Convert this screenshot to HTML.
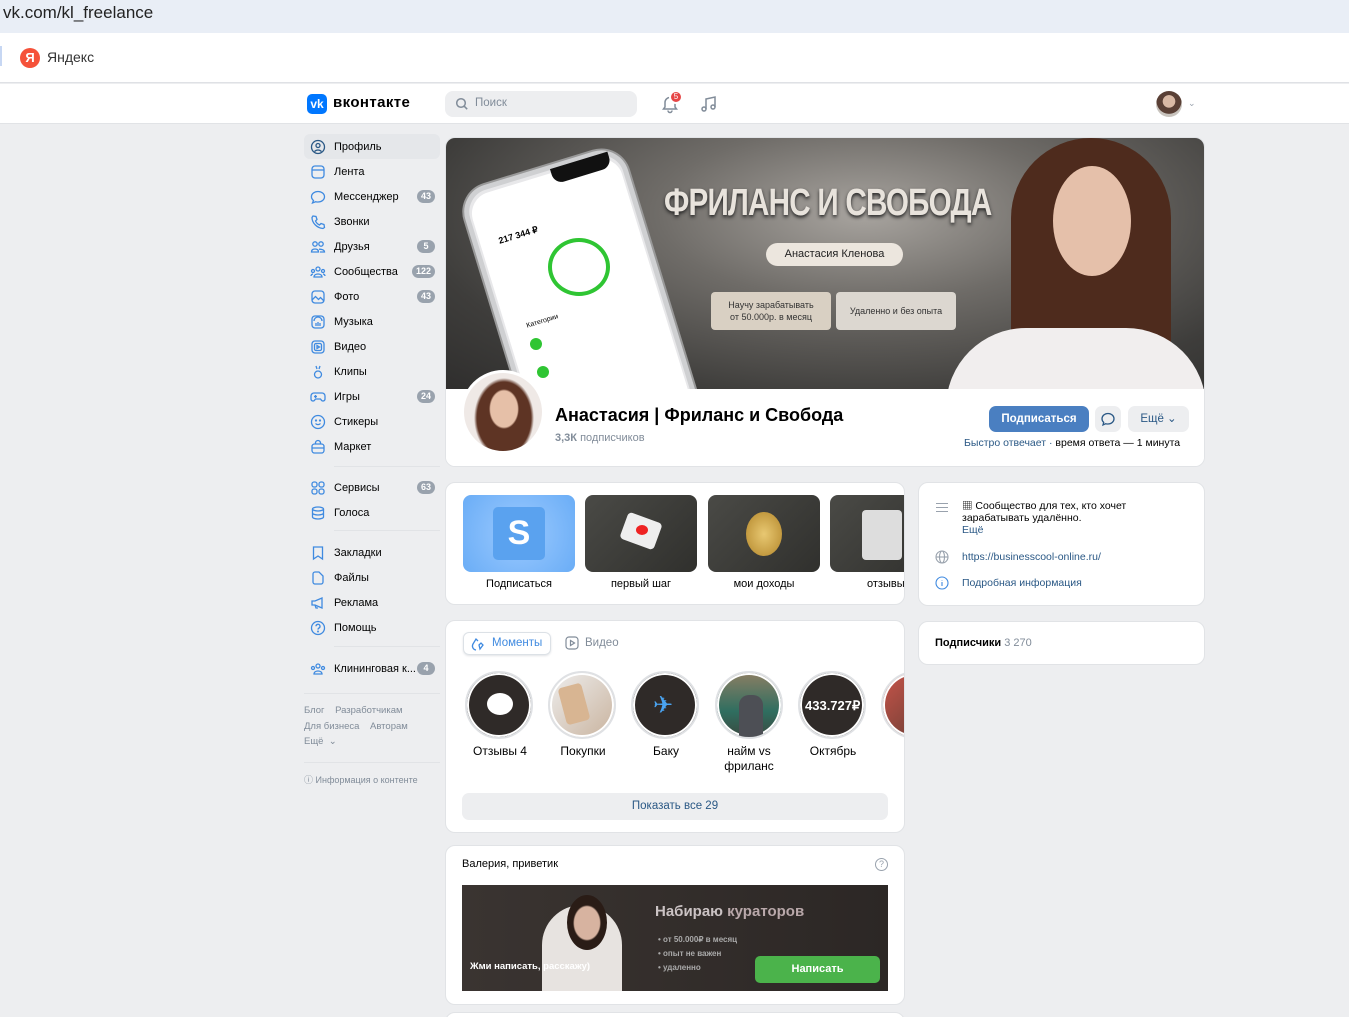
<!DOCTYPE html>
<html><head><meta charset="utf-8">
<style>
*{box-sizing:border-box;margin:0;padding:0}
html{overflow:hidden}
body{width:1349px;height:1017px;overflow:hidden;background:#edeef0;font-family:"Liberation Sans","Noto Sans CJK SC",sans-serif;font-size:11px;color:#000;position:relative}
.abs{position:absolute}
.card{position:absolute;background:#fff;border-radius:10px;border:1px solid #e1e3e6}
.nav{position:absolute;left:304px;width:136px;height:25px;display:flex;align-items:center;font-size:11px;color:#000}
.nav svg{width:16px;height:16px;margin-left:6px;margin-right:8px;flex:none}
.nav .b{margin-left:auto;margin-right:5px;background:#99a2ad;color:#fff;font-size:9px;font-weight:bold;border-radius:8px;height:13px;min-width:18px;padding:0 4px;line-height:13px;text-align:center}
.sep{position:absolute;left:334px;width:106px;height:1px;background:#e1e3e6}
.foot{position:absolute;left:304px;color:#818c99;font-size:9.5px}
.thumb{position:absolute;top:495px;width:112px;height:77px;border-radius:8px}
.tl{position:absolute;top:578px;width:112px;text-align:center;font-size:11px}
.mom{position:absolute;top:50px;width:68px;height:68px;border-radius:50%;border:2px solid #dfe1e4;background:#2f2a28;box-shadow:inset 0 0 0 2px #fff;overflow:hidden}
.ml{position:absolute;top:123px;width:80px;text-align:center;font-size:12px;line-height:15px}
</style></head><body>
<div class="abs" style="left:0;top:0;width:1349px;height:33px;background:#e9eef6"></div>
<div class="abs" style="left:3px;top:3px;font-size:17px;color:#222">vk.com/kl_freelance</div>
<div class="abs" style="left:0;top:33px;width:1349px;height:50px;background:#fff;border-bottom:1px solid #dfe1e5"></div>
<div class="abs" style="left:0;top:46px;width:2px;height:20px;background:#c7d7f3"></div>
<div class="abs" style="left:20px;top:48px;width:20px;height:20px;border-radius:50%;background:#f5523a;color:#fff;font-size:13px;font-weight:bold;text-align:center;line-height:20px">Я</div>
<div class="abs" style="left:47px;top:49px;font-size:14px;color:#333">Яндекс</div>
<div class="abs" style="left:0;top:84px;width:1349px;height:40px;background:#fff;border-bottom:1px solid #e1e3e6"></div>
<div class="abs" style="left:307px;top:94px;width:20px;height:20px;border-radius:5px;background:#0077ff;color:#fff;font-weight:bold;font-size:12px;text-align:center;line-height:20px">vk</div>
<div class="abs" style="left:333px;top:94px;font-size:15px;font-weight:bold;letter-spacing:0.4px">вконтакте</div>
<div class="abs" style="left:445px;top:91px;width:192px;height:26px;border-radius:8px;background:#edeef0"></div>
<svg class="abs" style="left:455px;top:97px" width="14" height="14" viewBox="0 0 14 14"><circle cx="6" cy="6" r="4.3" fill="none" stroke="#818c99" stroke-width="1.5"/><path d="M9.2 9.2l3 3" stroke="#818c99" stroke-width="1.5"/></svg>
<div class="abs" style="left:475px;top:97px;color:#818c99;font-size:11.5px">Поиск</div>
<svg class="abs" style="left:660px;top:94px" width="20" height="20" viewBox="0 0 20 20"><path d="M5 13V8.5a5 5 0 0110 0V13l1.5 2h-13z M8 16.5a2 2 0 004 0" fill="none" stroke="#818c99" stroke-width="1.5"/></svg>
<div class="abs" style="left:669px;top:90px;width:14px;height:14px;border-radius:50%;background:#e64646;border:2px solid #fff;color:#fff;font-size:8px;text-align:center;line-height:10px">5</div>
<svg class="abs" style="left:699px;top:94px" width="20" height="20" viewBox="0 0 20 20"><path d="M7 15V5l9-2v10" fill="none" stroke="#818c99" stroke-width="1.5"/><circle cx="5" cy="15" r="2" fill="none" stroke="#818c99" stroke-width="1.5"/><circle cx="14" cy="13" r="2" fill="none" stroke="#818c99" stroke-width="1.5"/></svg>
<div class="abs" style="left:1156px;top:91px;width:26px;height:26px;border-radius:50%;background:radial-gradient(circle at 50% 40%,#d9b9a5 0 30%,#5a4036 32% 60%,#c8c3bd 62%)"></div>
<div class="abs" style="left:1188px;top:98px;color:#99a2ad;font-size:9px">⌄</div>

<div class="abs" style="left:304px;top:134px;width:136px;height:25px;background:#e5e7ea;border-radius:6px"></div>
<div class="nav" style="top:134px"><svg viewBox="0 0 16 16" fill="none" stroke="#2a5885" stroke-width="1.3"><circle cx="8" cy="8" r="6.5"/><circle cx="8" cy="6.5" r="2"/><path d="M4.5 12.5c2-2 5-2 7 0"/></svg>Профиль</div>
<div class="nav" style="top:159px"><svg viewBox="0 0 16 16" fill="none" stroke="#3f8ae0" stroke-width="1.3"><rect x="2" y="2" width="12" height="12" rx="3"/><path d="M2 6h12"/></svg>Лента</div>
<div class="nav" style="top:184px"><svg viewBox="0 0 16 16" fill="none" stroke="#3f8ae0" stroke-width="1.3"><path d="M8 2.5c3.6 0 6.5 2.3 6.5 5.3S11.6 13 8 13c-.8 0-1.5-.1-2.2-.3L2.5 14l1-2.5C2.3 10.5 1.5 9.2 1.5 7.8 1.5 4.8 4.4 2.5 8 2.5z"/></svg>Мессенджер<span class="b">43</span></div>
<div class="nav" style="top:209px"><svg viewBox="0 0 16 16" fill="none" stroke="#3f8ae0" stroke-width="1.3"><path d="M3 2l3 .5 1 3-1.5 1.5a8 8 0 004 4L11 9.5l3 1 .5 3-1.5 1C7 14 2 9 2 3.5z"/></svg>Звонки</div>
<div class="nav" style="top:234px"><svg viewBox="0 0 16 16" fill="none" stroke="#3f8ae0" stroke-width="1.3"><circle cx="5" cy="5" r="2.2"/><circle cx="11" cy="5" r="2.2"/><path d="M1.5 13c0-2 1.5-3 3.5-3s3.5 1 3.5 3zM9 10.2c2 0 5.5.5 5.5 2.8H10"/></svg>Друзья<span class="b">5</span></div>
<div class="nav" style="top:259px"><svg viewBox="0 0 16 16" fill="none" stroke="#3f8ae0" stroke-width="1.3"><circle cx="8" cy="5" r="2"/><circle cx="3" cy="7" r="1.5"/><circle cx="13" cy="7" r="1.5"/><path d="M4 13c0-2 2-3 4-3s4 1 4 3zM1 12c0-1 1-2 2-2M15 12c0-1-1-2-2-2"/></svg>Сообщества<span class="b">122</span></div>
<div class="nav" style="top:284px"><svg viewBox="0 0 16 16" fill="none" stroke="#3f8ae0" stroke-width="1.3"><rect x="2" y="2" width="12" height="12" rx="3"/><path d="M2 11l3.5-3.5 3 3 2-2L14 12"/></svg>Фото<span class="b">43</span></div>
<div class="nav" style="top:309px"><svg viewBox="0 0 16 16" fill="none" stroke="#3f8ae0" stroke-width="1.3"><rect x="2" y="2" width="12" height="12" rx="3"/><path d="M4 7a4 4 0 018 0M6 12V9M8 12V8M10 12V9"/></svg>Музыка</div>
<div class="nav" style="top:334px"><svg viewBox="0 0 16 16" fill="none" stroke="#3f8ae0" stroke-width="1.3"><rect x="2" y="2" width="12" height="12" rx="3"/><rect x="4.5" y="4.5" width="7" height="7" rx="1.5"/><path d="M7 6.5v3l2.5-1.5z"/></svg>Видео</div>
<div class="nav" style="top:359px"><svg viewBox="0 0 16 16" fill="none" stroke="#3f8ae0" stroke-width="1.3"><circle cx="8" cy="10.5" r="3.5"/><path d="M6 2l1 3M10 2l-1 3"/></svg>Клипы</div>
<div class="nav" style="top:384px"><svg viewBox="0 0 16 16" fill="none" stroke="#3f8ae0" stroke-width="1.3"><path d="M4 4h8a3 3 0 013 3v3a2 2 0 01-3.5 1.3L10.5 10h-5l-1 1.3A2 2 0 011 10V7a3 3 0 013-3zM4 7.5h3M5.5 6v3"/></svg>Игры<span class="b">24</span></div>
<div class="nav" style="top:409px"><svg viewBox="0 0 16 16" fill="none" stroke="#3f8ae0" stroke-width="1.3"><circle cx="8" cy="8" r="6.5"/><path d="M5.5 9.5c1.3 1.5 3.7 1.5 5 0"/><circle cx="6" cy="6.5" r=".5"/><circle cx="10" cy="6.5" r=".5"/></svg>Стикеры</div>
<div class="nav" style="top:434px"><svg viewBox="0 0 16 16" fill="none" stroke="#3f8ae0" stroke-width="1.3"><rect x="2" y="5" width="12" height="9" rx="2.5"/><path d="M5.5 5V4a2.5 2.5 0 015 0v1M2 9h12"/></svg>Маркет</div>
<div class="sep" style="top:466px"></div>
<div class="nav" style="top:475px"><svg viewBox="0 0 16 16" fill="none" stroke="#3f8ae0" stroke-width="1.3"><rect x="2" y="2" width="5" height="5" rx="2"/><rect x="9" y="2" width="5" height="5" rx="2"/><rect x="2" y="9" width="5" height="5" rx="2"/><rect x="9" y="9" width="5" height="5" rx="2"/></svg>Сервисы<span class="b">63</span></div>
<div class="nav" style="top:500px"><svg viewBox="0 0 16 16" fill="none" stroke="#3f8ae0" stroke-width="1.3"><ellipse cx="8" cy="4" rx="5.5" ry="2"/><path d="M2.5 4v8c0 1.1 2.5 2 5.5 2s5.5-.9 5.5-2V4M2.5 8c0 1.1 2.5 2 5.5 2s5.5-.9 5.5-2"/></svg>Голоса</div>
<div class="sep" style="top:530px"></div>
<div class="nav" style="top:540px"><svg viewBox="0 0 16 16" fill="none" stroke="#3f8ae0" stroke-width="1.3"><path d="M3.5 2h9v12L8 11l-4.5 3z"/></svg>Закладки</div>
<div class="nav" style="top:565px"><svg viewBox="0 0 16 16" fill="none" stroke="#3f8ae0" stroke-width="1.3"><path d="M3 4a2 2 0 012-2h4l4 4v6a2 2 0 01-2 2H5a2 2 0 01-2-2z"/></svg>Файлы</div>
<div class="nav" style="top:590px"><svg viewBox="0 0 16 16" fill="none" stroke="#3f8ae0" stroke-width="1.3"><path d="M2 6h3l7-3v10L5 10H2zM5 10l1 3h2"/></svg>Реклама</div>
<div class="nav" style="top:615px"><svg viewBox="0 0 16 16" fill="none" stroke="#3f8ae0" stroke-width="1.3"><circle cx="8" cy="8" r="6.5"/><path d="M6 6.3a2 2 0 113 1.7c-.7.4-1 .8-1 1.6"/><circle cx="8" cy="11.5" r=".4"/></svg>Помощь</div>
<div class="sep" style="top:646px"></div>
<div class="nav" style="top:656px"><svg viewBox="0 0 16 16" fill="none" stroke="#3f8ae0" stroke-width="1.3"><circle cx="8" cy="5" r="2"/><circle cx="3" cy="7" r="1.5"/><circle cx="13" cy="7" r="1.5"/><path d="M4 13c0-2 2-3 4-3s4 1 4 3z"/></svg>Клининговая к...<span class="b">4</span></div>
<div class="abs" style="left:304px;top:693px;width:136px;height:1px;background:#e1e3e6"></div>
<div class="foot" style="top:705px">Блог &nbsp;&nbsp; Разработчикам</div>
<div class="foot" style="top:721px">Для бизнеса &nbsp;&nbsp; Авторам</div>
<div class="foot" style="top:736px">Ещё &nbsp;⌄</div>
<div class="abs" style="left:304px;top:762px;width:136px;height:1px;background:#e1e3e6"></div>
<div class="foot" style="top:773px;font-size:9px">ⓘ Информация о контенте</div>

<div class="card" style="left:445px;top:137px;width:760px;height:330px;overflow:hidden">
 <div class="abs" style="left:0;top:0;width:760px;height:252px;background:radial-gradient(ellipse at 55% 30%,#a8a49f 0%,#6f6c68 35%,#3e3d3b 75%,#2f2e2d 100%)"></div>
 <div class="abs" style="left:50px;top:24px;width:170px;height:290px;background:#e8e8ea;border:5px solid #cfd0d2;border-radius:28px;transform:rotate(-17deg);box-shadow:0 0 0 2px #999"></div>
 <div class="abs" style="left:58px;top:32px;width:156px;height:280px;background:#fff;border-radius:22px;transform:rotate(-17deg)"></div>
 <div class="abs" style="left:105px;top:22px;width:60px;height:16px;background:#111;border-radius:0 0 10px 10px;transform:rotate(-17deg)"></div>
 <div class="abs" style="left:52px;top:92px;font-size:9px;transform:rotate(-17deg);font-weight:bold">217 344 ₽</div>
 <div class="abs" style="left:102px;top:100px;width:62px;height:58px;border-radius:50%;border:4px solid #2fc533"></div>
 <div class="abs" style="left:80px;top:180px;font-size:7px;transform:rotate(-17deg)">Категории</div>
 <div class="abs" style="left:84px;top:200px;width:12px;height:12px;border-radius:50%;background:#2fc533"></div>
 <div class="abs" style="left:91px;top:228px;width:12px;height:12px;border-radius:50%;background:#2fc533"></div>
 <div class="abs" style="left:218px;top:44px;font-size:38px;font-weight:bold;color:#e8e3dc;letter-spacing:-1px;transform:scaleX(0.78);transform-origin:left;text-shadow:0 2px 4px #222;white-space:nowrap">ФРИЛАНС И СВОБОДА</div>
 <div class="abs" style="left:320px;top:105px;width:137px;height:23px;border-radius:12px;background:#ece6de;font-size:11px;text-align:center;line-height:23px;color:#222">Анастасия Кленова</div>
 <div class="abs" style="left:265px;top:154px;width:120px;height:38px;border-radius:4px;background:#d9d0c3;font-size:9px;text-align:center;line-height:12px;padding-top:7px;color:#333">Научу зарабатывать<br>от 50.000р. в месяц</div>
 <div class="abs" style="left:390px;top:154px;width:120px;height:38px;border-radius:4px;background:#dcd7d0;font-size:9px;text-align:center;line-height:38px;color:#333">Удаленно и без опыта</div>
 <div class="abs" style="left:565px;top:0;width:160px;height:250px;border-radius:80px 80px 30px 30px;background:#4e2b1d"></div>
 <div class="abs" style="left:607px;top:28px;width:78px;height:110px;border-radius:50%;background:#e5c0aa"></div>
 <div class="abs" style="left:500px;top:190px;width:260px;height:80px;border-radius:100px 100px 0 0;background:#f1eeee"></div>
 <div class="abs" style="left:0;top:251px;width:760px;height:80px;background:#fff"></div>
 <div class="abs" style="left:15px;top:232px;width:84px;height:84px;border-radius:50%;border:3px solid #fff;background:radial-gradient(ellipse 15px 20px at 40px 36px,#e6c0a8 0 90%,transparent 100%),radial-gradient(ellipse 30px 40px at 40px 45px,#5e3424 0 90%,transparent 100%),#efe9e6"></div>
 <div class="abs" style="left:109px;top:267px;font-size:18px;font-weight:bold;color:#000">Анастасия | Фриланс и Свобода</div>
 <div class="abs" style="left:109px;top:294px;font-size:11px;color:#818c99"><b>3,3К</b> подписчиков</div>
 <div class="abs" style="left:543px;top:268px;width:100px;height:26px;border-radius:7px;background:#4a7fc1;color:#fff;font-size:11.5px;font-weight:bold;text-align:center;line-height:26px">Подписаться</div>
 <div class="abs" style="left:649px;top:268px;width:26px;height:26px;border-radius:7px;background:#edeef0"></div>
 <svg class="abs" style="left:654px;top:273px" width="16" height="16" viewBox="0 0 16 16"><path d="M8 2.5c3.3 0 6 2.3 6 5.3s-2.7 5.2-6 5.2c-.8 0-1.5-.1-2.2-.3L3 14l.7-2.6C2.6 10.5 2 9.2 2 7.8 2 4.8 4.7 2.5 8 2.5z" fill="none" stroke="#2a5885" stroke-width="1.3"/></svg>
 <div class="abs" style="left:682px;top:268px;width:61px;height:26px;border-radius:7px;background:#edeef0;color:#2a5885;font-size:11.5px;text-align:center;line-height:26px">Ещё ⌄</div>
 <div class="abs" style="left:518px;top:299px;font-size:10.5px;color:#2a5885;white-space:nowrap">Быстро отвечает · <span style="color:#000">время ответа — 1 минута</span></div>
</div>

<div class="card" style="left:445px;top:482px;width:460px;height:123px;overflow:hidden">
 <div class="thumb" style="left:17px;top:12px;background:radial-gradient(circle,#9ccaff,#6aadf6)"><div class="abs" style="left:30px;top:12px;width:52px;height:53px;border-radius:5px;background:#5aa2ef;color:#fff;font-size:34px;font-weight:bold;text-align:center;line-height:53px">S</div></div>
 <div class="thumb" style="left:139px;top:12px;background:linear-gradient(135deg,#4a4a46,#30302d)"><div class="abs" style="left:38px;top:22px;width:36px;height:28px;background:#eee;border-radius:4px;transform:rotate(20deg)"></div><div class="abs" style="left:51px;top:30px;width:12px;height:10px;background:#e22;border-radius:50%"></div></div>
 <div class="thumb" style="left:262px;top:12px;background:linear-gradient(135deg,#4a4a46,#30302d)"><div class="abs" style="left:38px;top:17px;width:36px;height:44px;border-radius:50%;background:radial-gradient(#e8c872,#b3862a)"></div></div>
 <div class="thumb" style="left:384px;top:12px;background:linear-gradient(135deg,#4a4a46,#30302d)"><div class="abs" style="left:32px;top:15px;width:40px;height:50px;background:#ddd;border-radius:4px"></div></div>
 <div class="tl" style="left:17px;top:95px">Подписаться</div>
 <div class="tl" style="left:139px;top:95px">первый шаг</div>
 <div class="tl" style="left:262px;top:95px">мои доходы</div>
 <div class="tl" style="left:384px;top:95px;text-align:left;padding-left:37px">отзывы</div>
</div>

<div class="card" style="left:918px;top:482px;width:287px;height:124px">
 <div class="abs" style="left:17px;top:20px;width:12px;height:1px;background:#99a2ad;box-shadow:0 4px 0 #99a2ad,0 8px 0 #99a2ad"></div>
 <div class="abs" style="left:43px;top:17px;font-size:10.5px;line-height:12px;width:230px">▦ Сообщество для тех, кто хочет зарабатывать удалённо.<br><span style="color:#2a5885">Ещё</span></div>
 <svg class="abs" style="left:16px;top:67px" width="14" height="14" viewBox="0 0 14 14" fill="none" stroke="#99a2ad" stroke-width="1.1"><circle cx="7" cy="7" r="6"/><ellipse cx="7" cy="7" rx="2.5" ry="6"/><path d="M1 7h12"/></svg>
 <div class="abs" style="left:43px;top:68px;font-size:10.5px;color:#2a5885">https://businesscool-online.ru/</div>
 <svg class="abs" style="left:16px;top:93px" width="14" height="14" viewBox="0 0 14 14" fill="none" stroke="#3f8ae0" stroke-width="1.1"><circle cx="7" cy="7" r="6"/><path d="M7 6v4M7 4v.5"/></svg>
 <div class="abs" style="left:43px;top:94px;font-size:10.5px;color:#2a5885">Подробная информация</div>
</div>

<div class="card" style="left:918px;top:621px;width:287px;height:44px">
 <div class="abs" style="left:16px;top:15px;font-size:11px;font-weight:bold">Подписчики <span style="font-weight:normal;color:#818c99">3 270</span></div>
</div>

<div class="card" style="left:445px;top:620px;width:460px;height:213px;overflow:hidden">
 <div class="abs" style="left:17px;top:11px;width:88px;height:23px;border-radius:6px;border:1px solid #dce1e6;box-shadow:0 1px 2px #e1e3e6;color:#3f8ae0;font-size:11.5px;line-height:21px;padding-left:28px">Моменты</div>
 <svg class="abs" style="left:25px;top:15px" width="16" height="16" viewBox="0 0 16 16" fill="none" stroke="#3f8ae0" stroke-width="1.3"><path d="M5 14a4 4 0 01-3-6l3-5 2 2M8 9l2-2 2 2-3 4z"/></svg>
 <svg class="abs" style="left:119px;top:15px" width="14" height="14" viewBox="0 0 14 14" fill="none" stroke="#818c99" stroke-width="1.2"><rect x="1" y="1" width="12" height="12" rx="3"/><path d="M5.5 4.5v5l4-2.5z"/></svg>
 <div class="abs" style="left:139px;top:16px;color:#818c99;font-size:11.5px">Видео</div>
 <div class="mom" style="left:19px"><div class="abs" style="left:20px;top:20px;width:26px;height:22px;border-radius:50%;background:#fff"></div></div>
 <div class="mom" style="left:102px;background:linear-gradient(135deg,#eee,#c9b39e)"><div class="abs" style="left:12px;top:12px;width:24px;height:38px;background:#d8b592;border-radius:4px;transform:rotate(-15deg)"></div></div>
 <div class="mom" style="left:185px"><div class="abs" style="left:20px;top:18px;font-size:24px;color:#4aa3f0">✈</div></div>
 <div class="mom" style="left:269px;background:linear-gradient(180deg,#8a7e63 0%,#2f6e60 60%,#3a4a40)"><div class="abs" style="left:22px;top:22px;width:24px;height:44px;background:#4d4f55;border-radius:10px 10px 0 0"></div></div>
 <div class="mom" style="left:352px"><div class="abs" style="left:5px;top:25px;color:#fff;font-size:13px;font-weight:bold">433.727₽</div></div>
 <div class="mom" style="left:435px;background:linear-gradient(135deg,#c8544a,#5a3a30)"></div>
 <div class="ml" style="left:14px">Отзывы 4</div>
 <div class="ml" style="left:97px">Покупки</div>
 <div class="ml" style="left:180px">Баку</div>
 <div class="ml" style="left:263px">найм vs<br>фриланс</div>
 <div class="ml" style="left:347px">Октябрь</div>
 <div class="abs" style="left:16px;top:172px;width:426px;height:27px;border-radius:7px;background:#edeef0;color:#2a5885;font-size:11.5px;text-align:center;line-height:27px">Показать все 29</div>
</div>

<div class="card" style="left:445px;top:845px;width:460px;height:160px">
 <div class="abs" style="left:16px;top:12px;font-size:11px">Валерия, приветик</div>
 <div class="abs" style="left:429px;top:12px;width:13px;height:13px;border-radius:50%;border:1px solid #99a2ad;color:#99a2ad;font-size:9px;text-align:center;line-height:11px">?</div>
 <div class="abs" style="left:16px;top:39px;width:426px;height:106px;background:linear-gradient(90deg,#3a3431,#2c2725);overflow:hidden">
  <div class="abs" style="left:80px;top:20px;width:80px;height:100px;border-radius:40px 40px 0 0;background:#e7e3e0"></div>
  <div class="abs" style="left:105px;top:10px;width:40px;height:55px;border-radius:50%;background:radial-gradient(ellipse 14px 18px at 20px 28px,#d7b3a0 0 90%,#2a1c16 100%)"></div>
  <div class="abs" style="left:193px;top:18px;font-size:15px;font-weight:bold;color:#cbc3c4">Набираю <span style="color:#b9a8aa">кураторов</span></div>
  <div class="abs" style="left:196px;top:48px;font-size:8px;font-weight:bold;color:#aaa;line-height:14px">• от 50.000₽ в месяц<br>• опыт не важен<br>• удаленно</div>
  <div class="abs" style="left:8px;top:76px;font-size:9.5px;font-weight:bold;color:#fff">Жми написать, расскажу)</div>
  <div class="abs" style="left:293px;top:71px;width:125px;height:27px;border-radius:5px;background:#4bb34b;color:#fff;font-size:11px;font-weight:bold;text-align:center;line-height:27px">Написать</div>
 </div>
</div>
<div class="card" style="left:445px;top:1012px;width:460px;height:20px"></div>
</body></html>
